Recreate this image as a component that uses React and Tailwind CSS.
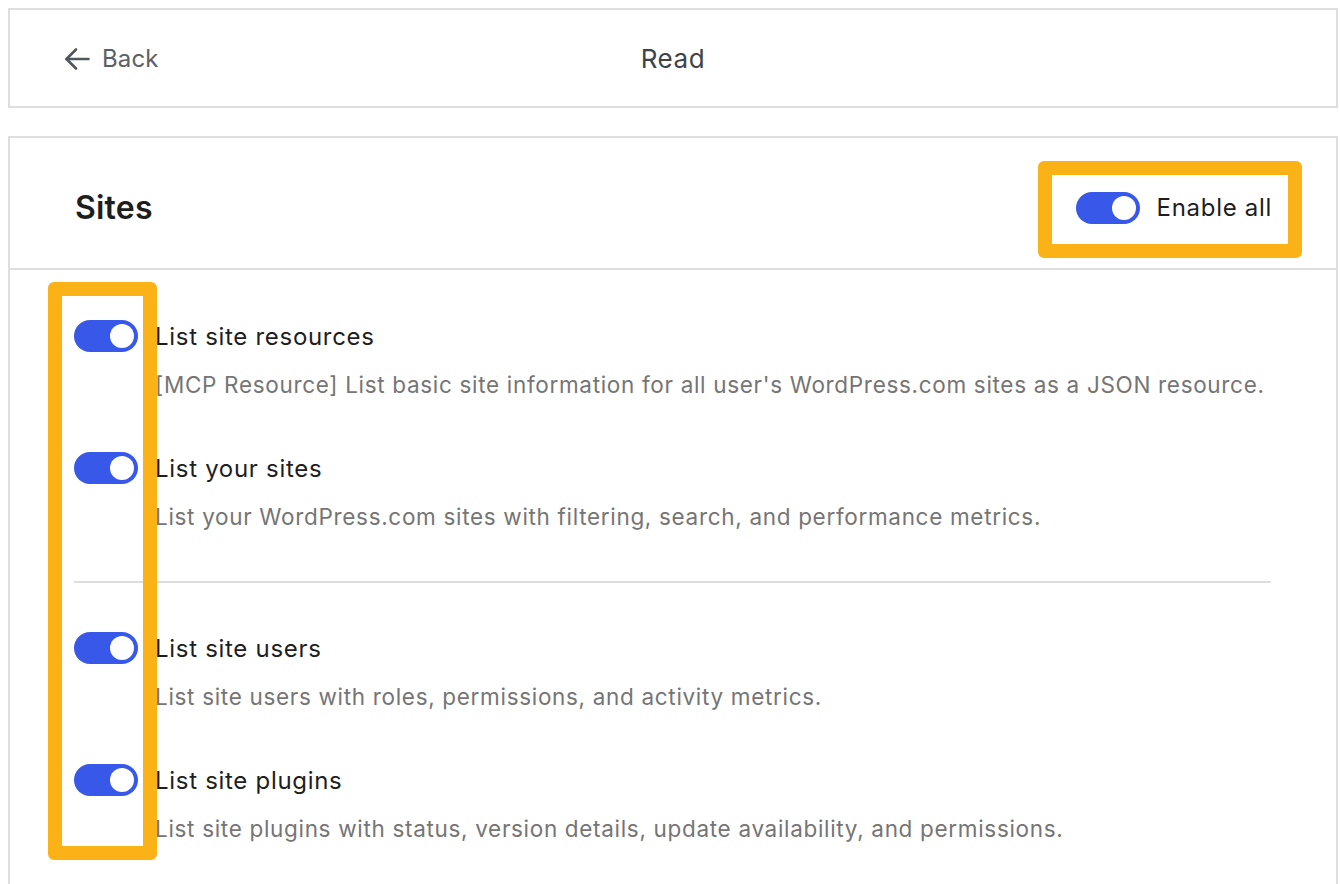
import React, { useState } from 'react';

const GROUPS = [
  [
    {
      key: 'resources',
      title: 'List site resources',
      desc: "[MCP Resource] List basic site information for all user's WordPress.com sites as a JSON resource.",
    },
    {
      key: 'sites',
      title: 'List your sites',
      desc: 'List your WordPress.com sites with filtering, search, and performance metrics.',
    },
  ],
  [
    {
      key: 'users',
      title: 'List site users',
      desc: 'List site users with roles, permissions, and activity metrics.',
    },
    {
      key: 'plugins',
      title: 'List site plugins',
      desc: 'List site plugins with status, version details, update availability, and permissions.',
    },
  ],
];

function Toggle({ checked, onChange }) {
  return (
    <button
      type="button"
      onClick={onChange}
      className={`relative shrink-0 w-[64px] h-[32px] rounded-full transition-colors ${
        checked ? 'bg-[#3858e9]' : 'bg-[#949494]'
      }`}
    >
      <span
        className={`absolute top-[4px] w-[24px] h-[24px] rounded-full bg-white transition-all ${
          checked ? 'left-[36px]' : 'left-[4px]'
        }`}
      />
    </button>
  );
}

function BackArrow() {
  return (
    <svg width="26" height="24" viewBox="0 0 26 24" fill="none" stroke="#50575e" strokeWidth="2.6" strokeLinecap="round" strokeLinejoin="round">
      <path d="M24.5 12H2.5" />
      <path d="M12 2.5L2.5 12L12 21.5" />
    </svg>
  );
}

export default function App() {
  const [enabled, setEnabled] = useState({ resources: true, sites: true, users: true, plugins: true });

  const allOn = Object.values(enabled).every(Boolean);

  const toggleAll = () => {
    const next = !allOn;
    setEnabled({ resources: next, sites: next, users: next, plugins: next });
  };

  return (
    <div className="relative w-[1340px] h-[884px] overflow-hidden bg-white pt-[8px] font-['Inter','Liberation_Sans',sans-serif]">
      {/* Top bar */}
      <div className="ml-[8px] w-[1330px] h-[100px] border-2 border-[#dedede] grid grid-cols-[1fr_auto_1fr] items-center">
        <button className="flex items-center gap-[12px] ml-[54px] mt-[2px] text-[24px] tracking-[0.1px] text-[#5b6067] justify-self-start">
          <BackArrow />
          <span>Back</span>
        </button>
        <div className="text-[26px] tracking-[0.6px] text-[#3c434a]">Read</div>
        <div />
      </div>

      {/* Sites card */}
      <div className="ml-[8px] mt-[28px] w-[1330px] h-[800px] border-2 border-[#dedede]">
        <div className="h-[132px] pt-[10px] border-b-2 border-[#dedede] flex items-center justify-between pl-[65px] pr-[64px]">
          <h2 className="text-[32px] font-semibold text-[#1e1e1e] tracking-[0.2px]">Sites</h2>
          <div className="flex items-center gap-[17px]">
            <Toggle checked={allOn} onChange={toggleAll} />
            <span className="text-[24px] tracking-[0.7px] text-[#1e1e1e]">Enable all</span>
          </div>
        </div>

        <div className="pt-[50px] px-[64px]">
          {GROUPS.map((group, gi) => (
            <div key={gi}>
              {gi > 0 && <div className="h-[2px] bg-[#dddddd] my-[49px] mr-[1px]" />}
              <div className="flex flex-col gap-[52px]">
                {group.map(item => (
                  <div key={item.key}>
                    <div className="flex items-center gap-[17px] h-[32px]">
                      <Toggle
                        checked={enabled[item.key]}
                        onChange={() => setEnabled(prev => ({ ...prev, [item.key]: !prev[item.key] }))}
                      />
                      <span className="text-[24px] tracking-[0.7px] text-[#1e1e1e] mt-[2px]">{item.title}</span>
                    </div>
                    <p className="mt-[18px] pl-[81px] text-[22.5px] tracking-[0.68px] leading-[30px] text-[#757575] whitespace-nowrap">{item.desc}</p>
                  </div>
                ))}
              </div>
            </div>
          ))}
        </div>
      </div>

      {/* Highlight annotations */}
      <div className="absolute left-[1038px] top-[161px] w-[264px] h-[97px] border-[14px] border-[#fbb216] rounded-[6px] pointer-events-none" />
      <div className="absolute left-[48px] top-[282px] w-[109px] h-[578px] border-[14px] border-[#fbb216] rounded-[6px] pointer-events-none" />
    </div>
  );
}
